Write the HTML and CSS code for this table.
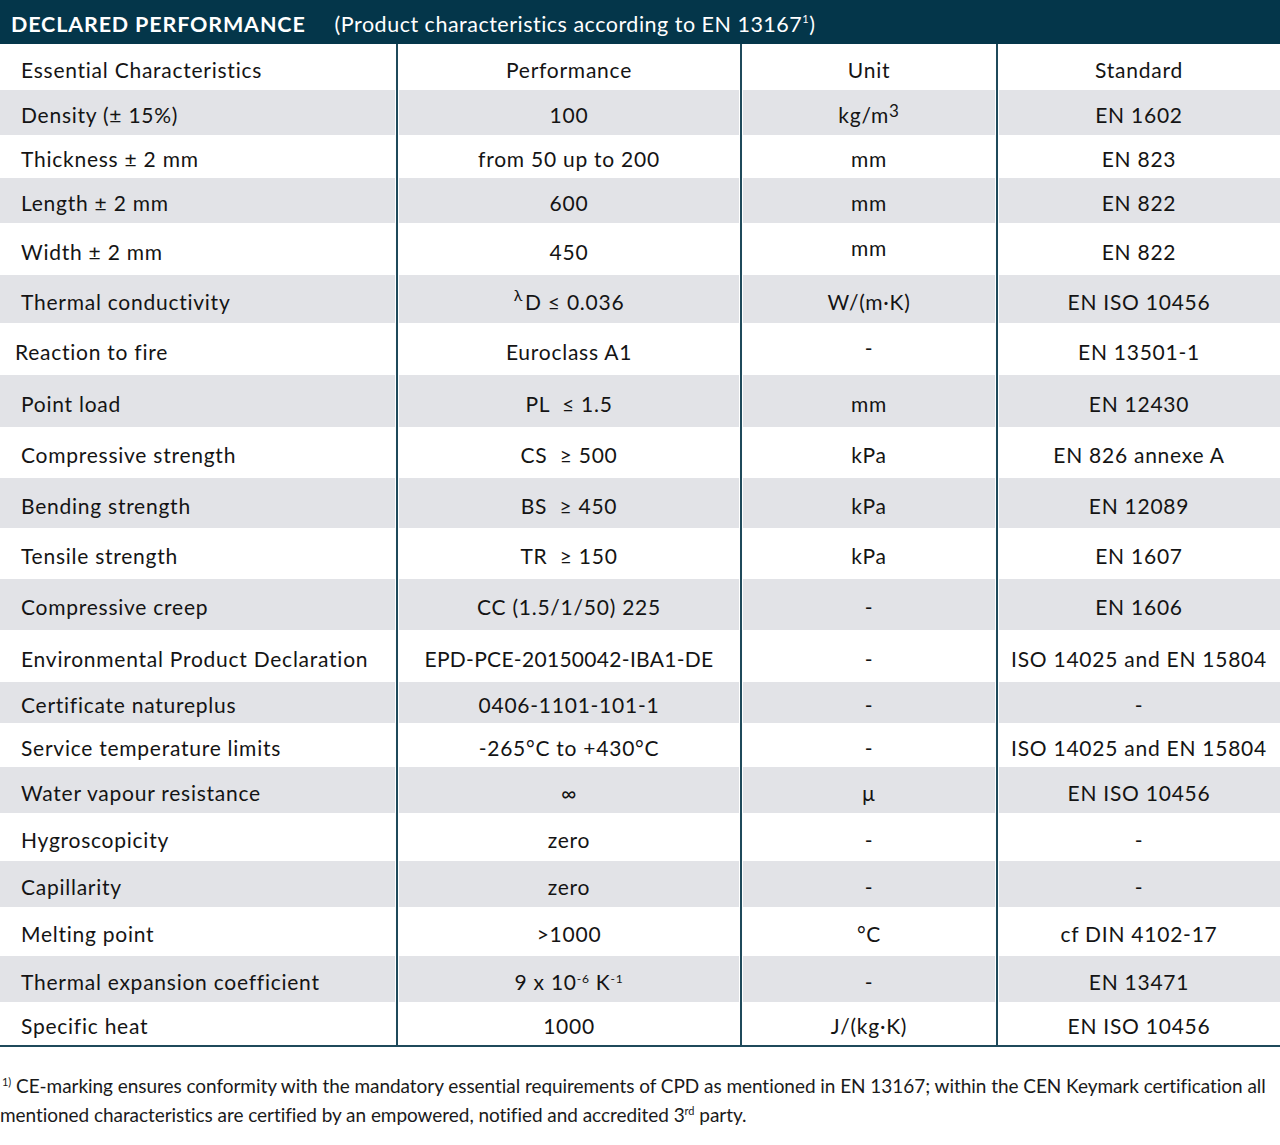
FILE: index.html
```html
<!DOCTYPE html>
<html>
<head>
<meta charset="utf-8">
<link rel="stylesheet" href="styles.css">
</head>
<body>
<div class="page">
  <div class="titlebar">
    <span class="title-main">DECLARED PERFORMANCE</span>
    <span class="title-sub">(Product characteristics according to EN 13167<sup class="fn">1</sup>)</span>
  </div>
  <table class="perf">
    <colgroup>
      <col class="c1"><col class="c2"><col class="c3"><col class="c4">
    </colgroup>
    <tr class="w h46 head"><td>Essential Characteristics</td><td>Performance</td><td>Unit</td><td>Standard</td></tr>
    <tr class="g h45"><td>Density (± 15%)</td><td>100</td><td>kg/m<sup class="up">3</sup></td><td>EN 1602</td></tr>
    <tr class="w h43"><td>Thickness ± 2 mm</td><td>from 50 up to 200</td><td>mm</td><td>EN 823</td></tr>
    <tr class="g h45"><td>Length ± 2 mm</td><td>600</td><td>mm</td><td>EN 822</td></tr>
    <tr class="w h52"><td>Width ± 2 mm</td><td>450</td><td class="hi">mm</td><td>EN 822</td></tr>
    <tr class="g h48"><td>Thermal conductivity</td><td><sup class="lam">λ</sup>D ≤ 0.036</td><td>W/(m·K)</td><td>EN ISO 10456</td></tr>
    <tr class="w h52"><td class="out">Reaction to fire</td><td>Euroclass A1</td><td class="hi">-</td><td>EN 13501-1</td></tr>
    <tr class="g h52"><td>Point load</td><td>PL &nbsp;≤ 1.5</td><td>mm</td><td>EN 12430</td></tr>
    <tr class="w h51"><td>Compressive strength</td><td>CS &nbsp;≥ 500</td><td>kPa</td><td>EN 826 annexe A</td></tr>
    <tr class="g h50"><td>Bending strength</td><td>BS &nbsp;≥ 450</td><td>kPa</td><td>EN 12089</td></tr>
    <tr class="w h51"><td>Tensile strength</td><td>TR &nbsp;≥ 150</td><td>kPa</td><td>EN 1607</td></tr>
    <tr class="g h51"><td>Compressive creep</td><td>CC (1.5/1/50) 225</td><td>-</td><td>EN 1606</td></tr>
    <tr class="w h52"><td>Environmental Product Declaration</td><td class="tight">EPD-PCE-20150042-IBA1-DE</td><td>-</td><td>ISO 14025 and EN 15804</td></tr>
    <tr class="g h41"><td>Certificate natureplus</td><td>0406-1101-101-1</td><td>-</td><td>-</td></tr>
    <tr class="w h44"><td>Service temperature limits</td><td>-265°C to +430°C</td><td>-</td><td>ISO 14025 and EN 15804</td></tr>
    <tr class="g h46"><td>Water vapour resistance</td><td>∞</td><td>µ</td><td>EN ISO 10456</td></tr>
    <tr class="w h48"><td>Hygroscopicity</td><td>zero</td><td>-</td><td>-</td></tr>
    <tr class="g h46"><td>Capillarity</td><td>zero</td><td>-</td><td>-</td></tr>
    <tr class="w h49"><td>Melting point</td><td>&gt;1000</td><td>°C</td><td>cf DIN 4102-17</td></tr>
    <tr class="g h46"><td>Thermal expansion coefficient</td><td>9 x 10<sup class="small">-6</sup> K<sup class="small">-1</sup></td><td>-</td><td>EN 13471</td></tr>
    <tr class="w h44 last"><td>Specific heat</td><td>1000</td><td>J/(kg·K)</td><td>EN ISO 10456</td></tr>
  </table>
  <p class="footnote"><sup class="fnote">1)</sup> CE-marking ensures conformity with the mandatory essential requirements of CPD as mentioned in EN 13167; within the CEN Keymark certification all<br>mentioned characteristics are certified by an empowered, notified and accredited 3<sup class="fnote">rd</sup> party.</p>
</div>
</body>
</html>
```
FILE: styles.css
```css
html, body {
  margin: 0;
  padding: 0;
  background: #ffffff;
}
.page {
  width: 1280px;
  font-family: "Lato", "Noto Sans", sans-serif;
  color: #141414;
}
.titlebar {
  height: 44px;
  background: #04364a;
  color: #ffffff;
  display: flex;
  align-items: center;
  padding-left: 11px;
  padding-top: 3px;
  box-sizing: border-box;
}
.title-main {
  font-weight: 700;
  font-size: 21.5px;
  letter-spacing: 0.85px;
}
.title-sub {
  margin-left: 29px;
  font-size: 21.5px;
  letter-spacing: 0.5px;
}
.fn {
  font-size: 11px;
  vertical-align: 9px;
  line-height: 0;
}
.perf {
  width: 1280px;
  border-collapse: collapse;
  table-layout: fixed;
  font-size: 21px;
  border-bottom: 2px solid #1f4a5b;
}
.c1 { width: 397px; }
.c2 { width: 344px; }
.c3 { width: 256px; }
.c4 { width: 283px; }
.perf td {
  padding: 4px 0 0 0;
  text-align: center;
  vertical-align: middle;
  white-space: nowrap;
  letter-spacing: 0.75px;
}
.perf td.tight {
  letter-spacing: 0.3px;
}
.perf td:first-child {
  text-align: left;
  padding-left: 21px;
}
.perf td.out {
  padding-left: 15px;
}
.perf td + td {
  border-left: 2px solid #1f4a5b;
}
.perf tr.g td {
  background: #e2e3e7;
  box-shadow: inset 1px 0 0 #ffffff, inset -1px 0 0 #ffffff;
}
.perf tr.g td:first-child {
  box-shadow: inset -1px 0 0 #ffffff;
}
.perf tr.g td:last-child {
  box-shadow: inset 1px 0 0 #ffffff;
}
.perf tr.w td { background: #ffffff; }
.perf tr.head td { padding-top: 5px; }
.h41 { height: 41px; }
.h43 { height: 43px; }
.h44 { height: 44px; }
.h45 { height: 45px; }
.h46 { height: 46px; }
.h48 { height: 48px; }
.h49 { height: 49px; }
.h50 { height: 50px; }
.h51 { height: 51px; }
.h52 { height: 52px; }
.perf td.hi { padding-top: 0; padding-bottom: 4px; }
.up {
  font-size: 17px;
  vertical-align: 6px;
  line-height: 0;
}
.lam {
  font-size: 16px;
  vertical-align: 9px;
  line-height: 0;
  margin-right: 2px;
}
.small {
  font-size: 12px;
  vertical-align: 7px;
  line-height: 0;
}
.footnote {
  margin: 24px 0 0 0;
  font-size: 19px;
  line-height: 29px;
  letter-spacing: -0.05px;
  word-spacing: 0;
  color: #1a1a1a;
  white-space: nowrap;
}
.footnote .fnote {
  font-size: 11px;
  vertical-align: 7px;
  line-height: 0;
}
.footnote .fnote:first-child {
  margin-left: 2px;
}
```
